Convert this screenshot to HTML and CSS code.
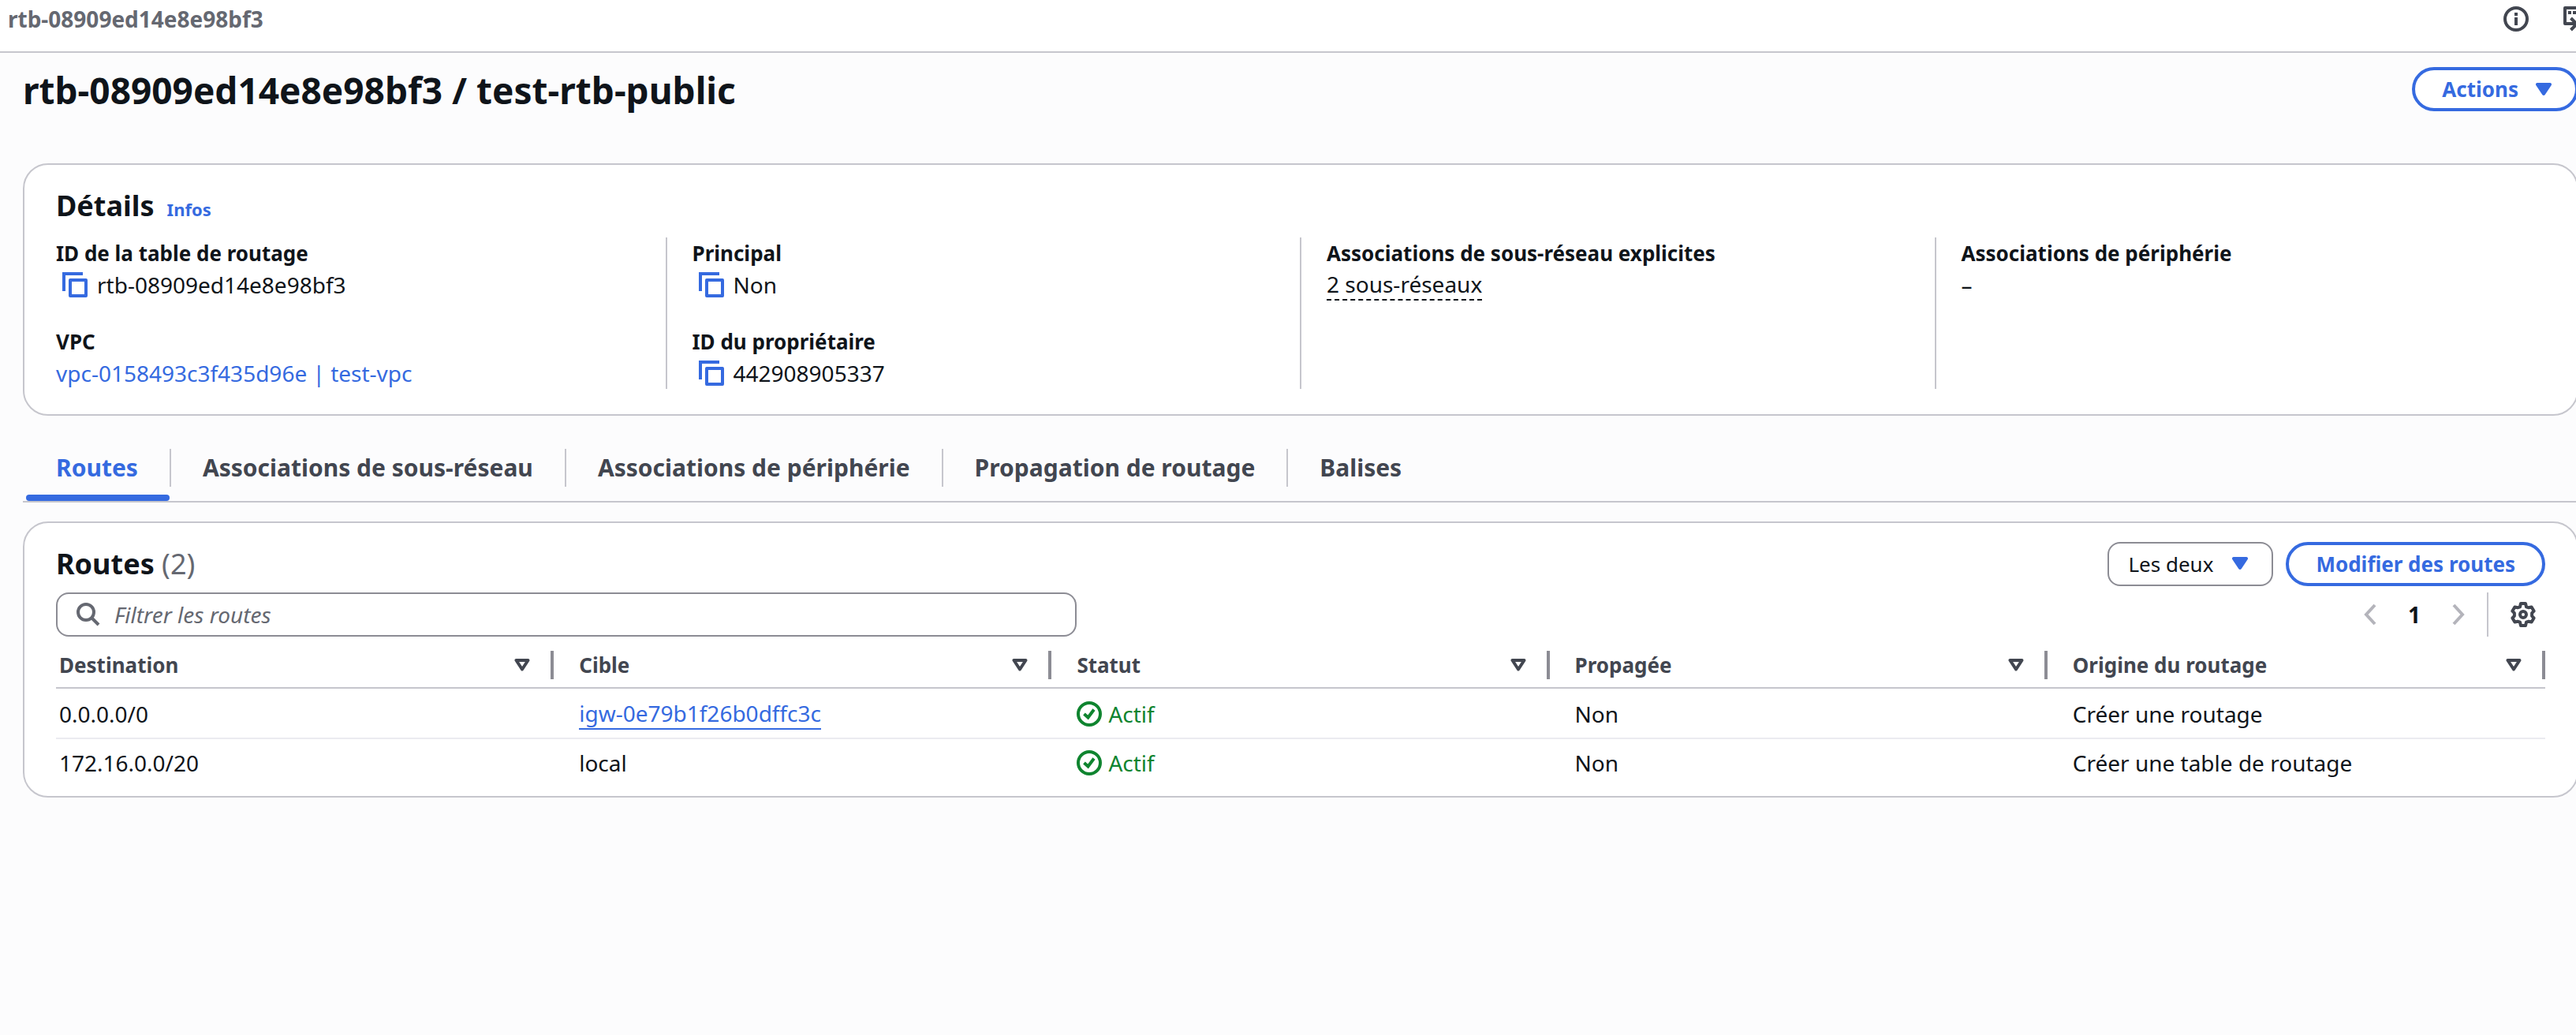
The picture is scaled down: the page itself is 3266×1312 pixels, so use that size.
FILE: index.html
```html
<!DOCTYPE html>
<html lang="fr">
<head>
<meta charset="utf-8">
<meta name="viewport" content="width=device-width, initial-scale=1">
<title>rtb-08909ed14e8e98bf3</title>
<link rel="stylesheet" href="styles.css">
</head>
<body>
<svg class="sprite" aria-hidden="true">
  <symbol id="copy" viewBox="0 0 32 32"><path d="M2 24V2H26" fill="none" stroke="currentColor" stroke-width="4"/><path d="M10 10h20v20H10z" fill="none" stroke="currentColor" stroke-width="4" stroke-linejoin="round"/></symbol>
  <symbol id="caret" viewBox="0 0 20 16"><path d="M2 0h16a2 2 0 0 1 1.600 3.200l-8 12a2 2 0 0 1-3.200 0l-8-12A2 2 0 0 1 2 0z" fill="currentColor"/></symbol>
  <symbol id="sort" viewBox="0 0 20 16"><path d="M2.500 2h15L10 13.500z" fill="none" stroke="currentColor" stroke-width="4" stroke-linejoin="round"/></symbol>
  <symbol id="check" viewBox="0 0 32 32"><circle cx="16" cy="16" r="14" fill="none" stroke="currentColor" stroke-width="4"/><path d="M9.500 16l5 4.500 7.500-10" fill="none" stroke="currentColor" stroke-width="4"/></symbol>
</svg>

<header class="topbar">
  <span class="crumb">rtb-08909ed14e8e98bf3</span>
  <div class="topbar-tools">
    <button class="icon-button" type="button" aria-label="Informations">
      <svg class="icon" viewBox="0 0 32 32"><circle cx="16" cy="16" r="14" fill="none" stroke="currentColor" stroke-width="4"/><path d="M14 8h4v4h-4zM14 14h4v10h-4z" fill="currentColor"/></svg>
    </button>
    <button class="icon-button" type="button" aria-label="CloudShell">
      <svg class="icon" viewBox="0 0 32 32"><path d="M17 22H2V2h28v20" fill="none" stroke="currentColor" stroke-width="4" stroke-linejoin="round"/><path d="M6 6h4v4H6zM12 6h4v4h-4z" fill="currentColor"/><path d="M9.500 15l7.500 7.500L9.500 30" fill="none" stroke="currentColor" stroke-width="4"/></svg>
    </button>
  </div>
</header>

<main class="content">
  <div class="page-head">
    <h1>rtb-08909ed14e8e98bf3 / test-rtb-public</h1>
    <button class="button button-menu" type="button">Actions <svg class="caret"><use href="#caret"/></svg></button>
  </div>

  <section class="panel details">
    <div class="panel-title">
      <h2>Détails</h2>
      <a class="info" href="#infos">Infos</a>
    </div>
    <div class="columns">
      <dl class="column">
        <div><dt>ID de la table de routage</dt><dd><button class="copy" type="button" aria-label="Copier"><svg class="icon"><use href="#copy"/></svg></button>rtb-08909ed14e8e98bf3</dd></div>
        <div><dt>VPC</dt><dd><a href="#vpc">vpc-0158493c3f435d96e | test-vpc</a></dd></div>
      </dl>
      <dl class="column">
        <div><dt>Principal</dt><dd><button class="copy" type="button" aria-label="Copier"><svg class="icon"><use href="#copy"/></svg></button>Non</dd></div>
        <div><dt>ID du propriétaire</dt><dd><button class="copy" type="button" aria-label="Copier"><svg class="icon"><use href="#copy"/></svg></button>442908905337</dd></div>
      </dl>
      <dl class="column">
        <div><dt>Associations de sous-réseau explicites</dt><dd><button class="popover-trigger" type="button">2 sous-réseaux</button></dd></div>
      </dl>
      <dl class="column">
        <div><dt>Associations de périphérie</dt><dd>–</dd></div>
      </dl>
    </div>
  </section>

  <nav class="tabs">
    <a class="tab active" href="#routes" aria-current="page"><span>Routes</span></a>
    <a class="tab" href="#sous-reseau"><span>Associations de sous-réseau</span></a>
    <a class="tab" href="#peripherie"><span>Associations de périphérie</span></a>
    <a class="tab" href="#propagation"><span>Propagation de routage</span></a>
    <a class="tab" href="#balises"><span>Balises</span></a>
  </nav>

  <section class="panel routes">
    <div class="routes-head">
      <h2>Routes <span class="count">(2)</span></h2>
      <div class="routes-actions">
        <div class="select">
          <select aria-label="Type de routes"><option>Les deux</option></select>
          <svg class="caret"><use href="#caret"/></svg>
        </div>
        <button class="button" type="button">Modifier des routes</button>
      </div>
    </div>
    <div class="routes-tools">
      <label class="search">
        <svg class="search-icon" viewBox="0 0 30 30"><circle cx="12" cy="12" r="10" fill="none" stroke="currentColor" stroke-width="4"/><path d="M19 19l9 9" stroke="currentColor" stroke-width="4"/></svg>
        <input type="search" placeholder="Filtrer les routes" aria-label="Filtrer les routes">
      </label>
      <div class="paging">
        <button class="page-arrow" type="button" aria-label="Page précédente" disabled><svg class="arrow" viewBox="0 0 16 28"><path d="M14 2L3 14l11 12" fill="none" stroke="currentColor" stroke-width="4"/></svg></button>
        <button class="page-number" type="button">1</button>
        <button class="page-arrow" type="button" aria-label="Page suivante" disabled><svg class="arrow" viewBox="0 0 16 28"><path d="M2 2l11 12L2 26" fill="none" stroke="currentColor" stroke-width="4"/></svg></button>
        <div class="settings">
          <button class="icon-button" type="button" aria-label="Préférences"><svg class="icon" viewBox="0 0 32 32"><path d="M13 2H19L20 6.300 23.100 7.300 26.600 6.400 29.600 11.600 27.100 14.200V17.800L29.600 20.400 26.600 25.600 23.100 24.700 20 25.700 19 30H13L12 25.700 8.900 24.700 5.400 25.600 2.400 20.400 4.900 17.800V14.200L2.400 11.600 5.400 6.400 8.900 7.300 12 6.300z" fill="none" stroke="currentColor" stroke-width="4" stroke-linejoin="round"/><circle cx="16" cy="16" r="4" fill="none" stroke="currentColor" stroke-width="4"/></svg></button>
        </div>
      </div>
    </div>
    <table>
      <thead>
        <tr>
          <th scope="col"><div class="head-cell">Destination<svg class="caret"><use href="#sort"/></svg></div></th>
          <th scope="col"><div class="head-cell">Cible<svg class="caret"><use href="#sort"/></svg></div></th>
          <th scope="col"><div class="head-cell">Statut<svg class="caret"><use href="#sort"/></svg></div></th>
          <th scope="col"><div class="head-cell">Propagée<svg class="caret"><use href="#sort"/></svg></div></th>
          <th scope="col"><div class="head-cell">Origine du routage<svg class="caret"><use href="#sort"/></svg></div></th>
        </tr>
      </thead>
      <tbody>
        <tr>
          <td>0.0.0.0/0</td>
          <td><a class="target" href="#igw">igw-0e79b1f26b0dffc3c</a></td>
          <td><span class="status"><svg class="icon"><use href="#check"/></svg>Actif</span></td>
          <td>Non</td>
          <td>Créer une routage</td>
        </tr>
        <tr>
          <td>172.16.0.0/20</td>
          <td>local</td>
          <td><span class="status"><svg class="icon"><use href="#check"/></svg>Actif</span></td>
          <td>Non</td>
          <td>Créer une table de routage</td>
        </tr>
      </tbody>
    </table>
  </section>
</main>
</body>
</html>
```

FILE: styles.css
```css
:root {
  --blue: #356ae0;
  --ink: #0f141a;
  --slate: #424650;
  --muted: #656871;
  --line: #c6c6cd;
  --control: #8c8c94;
  --green: #0f842f;
}

* { box-sizing: border-box; }

body {
  margin: 0;
  overflow-x: hidden;
  background: #fcfcfd;
  color: var(--ink);
  font: 28px/40px "Noto Sans", "Open Sans", sans-serif;
}

h1, h2, dl, dd { margin: 0; }
a { color: var(--blue); text-decoration: none; }
button, input, select { font: inherit; color: inherit; }
button { margin: 0; padding: 0; border: 0; background: none; cursor: pointer; }

.sprite { display: none; }
.icon { display: block; width: 32px; height: 32px; flex: none; }
.caret { display: block; width: 20px; height: 16px; flex: none; }
.icon-button { color: var(--slate); }

.topbar {
  display: flex;
  justify-content: space-between;
  align-items: flex-start;
  height: 67px;
  padding: 4px 0 0 10px;
  border-bottom: 2px solid var(--line);
  background: #fff;
}
.crumb { color: var(--muted); font-weight: 700; }
.topbar-tools { display: flex; gap: 44px; margin-right: -16px; padding-top: 4px; }

.content { margin: 0 -3px 0 29px; }

.page-head {
  display: flex;
  justify-content: space-between;
  align-items: flex-start;
  padding: 18px 0 64px;
}
h1 { font-size: 46px; line-height: 58px; font-weight: 700; }

.button {
  height: 56px;
  padding: 0 34px;
  border: 4px solid var(--blue);
  border-radius: 28px;
  background: #fff;
  color: var(--blue);
  font-size: 26px;
  font-weight: 700;
  line-height: 48px;
}
.button-menu { display: flex; align-items: center; gap: 22px; padding: 0 30px 0 34px; }

.panel {
  border: 2px solid var(--line);
  border-radius: 32px;
  background: #fff;
}
h2 { font-size: 36px; line-height: 48px; font-weight: 700; }

.details { padding: 28px 40px 32px; }
.panel-title { display: flex; align-items: baseline; gap: 16px; margin-bottom: 16px; }
.info { font-size: 22px; line-height: 32px; font-weight: 700; }

.columns {
  display: grid;
  grid-template-columns: repeat(4, 1fr);
  gap: 30px;
  margin-left: -32px;
}
.column {
  display: grid;
  align-content: start;
  gap: 32px;
  padding-left: 32px;
  border-left: 2px solid var(--line);
}
.column:first-child { border-left: 0; }
dt { font-size: 26px; font-weight: 700; }
dd { display: flex; align-items: center; }
.copy { margin: 0 12px 0 8px; color: var(--blue); }
.popover-trigger { line-height: 38px; border-bottom: 2px dashed var(--ink); }

.tabs {
  display: flex;
  margin: 34px 0 24px;
  padding-left: 2px;
  border-bottom: 2px solid var(--line);
  font-size: 30px;
  line-height: 48px;
  font-weight: 700;
}
.tab { padding: 8px 0 18px; color: var(--slate); }
.tab span { display: block; padding: 0 40px; border-right: 2px solid var(--line); }
.tab:last-child span { border-color: transparent; }
.active { position: relative; color: var(--blue); }
.active::after {
  content: "";
  position: absolute;
  inset: auto 2px 0 2px;
  height: 8px;
  border-radius: 4px;
  background: var(--blue);
}

.routes { padding: 24px 40px 12px; }
.routes-head, .routes-actions, .routes-tools, .paging { display: flex; align-items: center; }
.routes-head, .routes-tools { justify-content: space-between; }
.routes-head { margin-bottom: 8px; }
.count { color: var(--muted); font-weight: 400; }
.routes-actions { gap: 16px; }

.select { position: relative; }
.select select {
  appearance: none;
  width: 210px;
  height: 56px;
  padding: 0 24px;
  border: 2px solid var(--control);
  border-radius: 16px;
  background: #fff;
  font-size: 26px;
}
.select .caret { position: absolute; top: 19px; right: 32px; color: var(--blue); pointer-events: none; }

.search {
  display: flex;
  align-items: center;
  gap: 18px;
  width: 41%;
  height: 56px;
  padding: 0 24px;
  border: 2px solid var(--control);
  border-radius: 16px;
  color: var(--muted);
}
.search-icon { width: 30px; height: 30px; flex: none; }
.search input { flex: 1; min-width: 0; padding: 0; border: 0; outline: 0; background: none; }
.search input::placeholder { color: var(--muted); font-style: italic; opacity: 1; }

.arrow { display: block; width: 16px; height: 28px; }
.page-arrow { color: #b4b4bb; }
.page-number { padding: 0 40px; font-weight: 700; }
.settings { display: flex; align-items: center; height: 56px; margin-left: 28px; padding: 0 12px 0 28px; border-left: 2px solid var(--line); }

table { width: 100%; margin-top: 8px; border-collapse: separate; border-spacing: 0; table-layout: fixed; }
th { padding: 10px 0; border-bottom: 2px solid var(--line); color: var(--slate); font-size: 26px; font-weight: 700; line-height: 36px; text-align: left; }
.head-cell { display: flex; justify-content: space-between; align-items: center; padding: 0 26px 0 32px; border-right: 4px solid var(--control); }
td { padding: 10px 32px; line-height: 40px; }
tbody tr:first-child td { padding-top: 12px; }
tbody tr:not(:last-child) td { border-bottom: 2px solid #ebebf0; }
th:first-child .head-cell, td:first-child { padding-left: 4px; }
.target { display: block; width: max-content; line-height: 38px; border-bottom: 2px solid var(--blue); }
.status { display: flex; align-items: center; gap: 8px; color: var(--green); }
```
